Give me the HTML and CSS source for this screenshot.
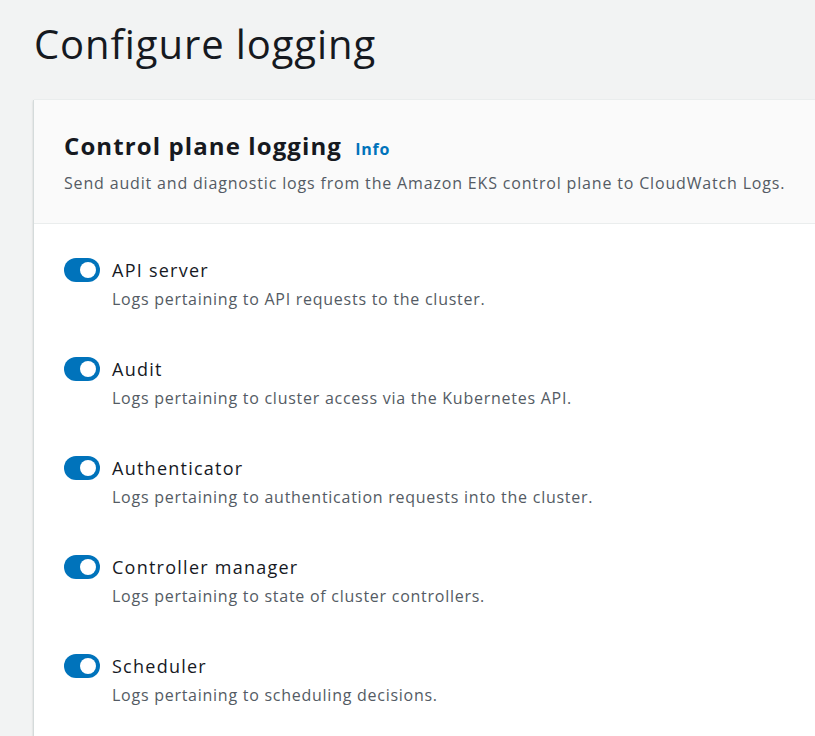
FILE: index.html
```html
<!DOCTYPE html>
<html>
<head>
<meta charset="utf-8">
<link rel="stylesheet" href="styles.css">
</head>
<body>
<h1 class="page-title">Configure logging</h1>
<section class="card">
  <header class="card-header">
    <h2 class="card-title">Control plane logging <a class="info" href="#">Info</a></h2>
    <p class="card-desc">Send audit and diagnostic logs from the Amazon EKS control plane to CloudWatch Logs.</p>
  </header>
  <div class="card-body">
    <div class="toggle-row">
      <span class="toggle"><span class="knob"></span></span>
      <div class="toggle-text">
        <div class="toggle-label">API server</div>
        <div class="toggle-desc">Logs pertaining to API requests to the cluster.</div>
      </div>
    </div>
    <div class="toggle-row">
      <span class="toggle"><span class="knob"></span></span>
      <div class="toggle-text">
        <div class="toggle-label">Audit</div>
        <div class="toggle-desc">Logs pertaining to cluster access via the Kubernetes API.</div>
      </div>
    </div>
    <div class="toggle-row">
      <span class="toggle"><span class="knob"></span></span>
      <div class="toggle-text">
        <div class="toggle-label">Authenticator</div>
        <div class="toggle-desc">Logs pertaining to authentication requests into the cluster.</div>
      </div>
    </div>
    <div class="toggle-row">
      <span class="toggle"><span class="knob"></span></span>
      <div class="toggle-text">
        <div class="toggle-label">Controller manager</div>
        <div class="toggle-desc">Logs pertaining to state of cluster controllers.</div>
      </div>
    </div>
    <div class="toggle-row">
      <span class="toggle"><span class="knob"></span></span>
      <div class="toggle-text">
        <div class="toggle-label">Scheduler</div>
        <div class="toggle-desc">Logs pertaining to scheduling decisions.</div>
      </div>
    </div>
  </div>
</section>
</body>
</html>
```
FILE: styles.css
```css
html, body {
  margin: 0;
  padding: 0;
  background: #f2f3f3;
  overflow: hidden;
  font-family: "Open Sans", "Noto Sans", sans-serif;
  color: #16191f;
}
.page-title {
  margin: 0;
  padding: 18px 0 0 34px;
  font-size: 40px;
  font-weight: 400;
  letter-spacing: 0.9px;
  line-height: 52px;
  height: 82px;
}
.card {
  margin-left: 34px;
  width: 900px;
  background: #ffffff;
  box-shadow: -1px 0 0 #d5dbdb, 0 -1px 0 #eaeded, -1px 1px 2px rgba(0,0,0,0.15);
}
.card-header {
  background: #fafafa;
  border-bottom: 1px solid #eaeded;
  padding: 28px 30px 28px 30px;
}
.card-title {
  margin: 0;
  font-size: 24px;
  font-weight: 700;
  letter-spacing: 1.1px;
  line-height: 36px;
}
.info {
  font-size: 16px;
  font-weight: 700;
  letter-spacing: 0.75px;
  color: #0073bb;
  text-decoration: none;
  margin-left: 6px;
}
.card-desc {
  margin: 4px 0 0;
  font-size: 16px;
  letter-spacing: 0.83px;
  line-height: 24px;
  color: #545b64;
}
.card-body {
  padding: 34px 30px 40px 30px;
  display: flex;
  flex-direction: column;
  gap: 44px;
}
.toggle-row {
  display: flex;
  align-items: flex-start;
  gap: 12px;
}
.toggle {
  flex: none;
  width: 36px;
  height: 24px;
  border-radius: 12px;
  background: #0073bb;
  position: relative;
}
.knob {
  position: absolute;
  right: 4px;
  top: 4px;
  width: 16px;
  height: 16px;
  border-radius: 50%;
  background: #ffffff;
}
.toggle-label {
  font-size: 18px;
  letter-spacing: 1.25px;
  line-height: 24px;
}
.toggle-desc {
  margin-top: 3px;
  font-size: 16px;
  letter-spacing: 0.74px;
  line-height: 28px;
  color: #545b64;
}
```
